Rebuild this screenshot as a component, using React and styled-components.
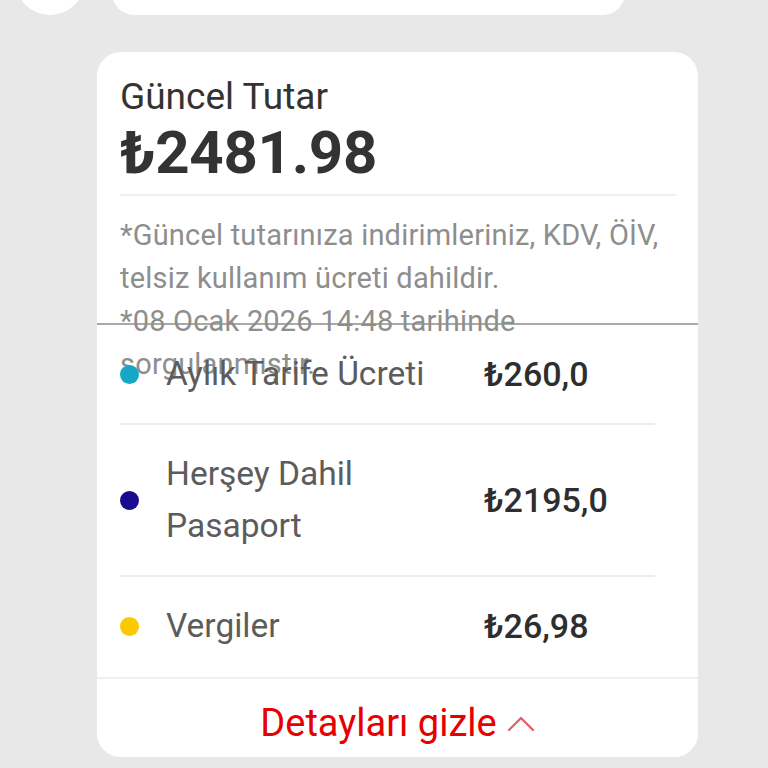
import React from "react";
import styled, { createGlobalStyle } from "styled-components";

const Global = createGlobalStyle`
  html, body { margin: 0; padding: 0; background: #e8e8e8; }
  body { font-family: Roboto, "Noto Sans", Arial, sans-serif; }
  * { box-sizing: border-box; }
`;

const Page = styled.div`
  width: 768px;
  min-height: 768px;
  background: #e8e8e8;
  overflow: hidden;
`;

const TopRow = styled.div`
  height: 15px;
  display: flex;
  align-items: flex-end;
  overflow: hidden;
  padding-left: 15px;
  gap: 27px;
`;

const Avatar = styled.div`
  width: 70px;
  height: 70px;
  flex: none;
  border-radius: 50%;
  background: #fff;
  display: flex;
  align-items: center;
  justify-content: center;
  padding-bottom: 20px;
`;

const AvatarMark = styled.div`
  width: 20px;
  height: 40px;
  border-radius: 10px;
  background: #333;
`;

const TopCard = styled.div`
  width: 513px;
  height: 60px;
  flex: none;
  background: #fff;
  border-radius: 22px;
`;

const Card = styled.section`
  margin: 37px 0 0 97px;
  width: 601px;
  background: #fff;
  border-radius: 24px;
  overflow: hidden;
`;

const Header = styled.div`
  padding: 22px 22px 0 23px;
`;

const Title = styled.div`
  font-size: 37px;
  line-height: 46px;
  color: #333;
`;

const Amount = styled.div`
  font-size: 60px;
  line-height: 66px;
  font-weight: 700;
  color: #333;
  letter-spacing: -0.3px;
  padding-bottom: 8px;
  border-bottom: 2px solid #f0f0f0;
`;

const Note = styled.div`
  height: 127px;
  padding: 18px 22px 0 23px;
  font-size: 29px;
  line-height: 43px;
  letter-spacing: 0.2px;
  color: #8e8e8e;
  white-space: pre-line;
`;

const List = styled.div`
  border-top: 2px solid #a9a9a9;
  padding: 0 43px 0 23px;
`;

const Row = styled.div`
  display: grid;
  grid-template-columns: 46px 318px auto;
  align-items: center;
  padding: 23px 0 ${(p) => (p.$last ? "25px" : "23px")};
  border-bottom: ${(p) => (p.$last ? "none" : "2px solid #ececec")};
`;

const Dot = styled.span`
  width: 19px;
  height: 19px;
  border-radius: 50%;
  background: ${(p) => p.$color};
`;

const Label = styled.span`
  font-size: 33.5px;
  line-height: 52px;
  color: #5c5c5c;
  padding-right: 40px;
`;

const Value = styled.span`
  font-size: 34px;
  line-height: 52px;
  font-weight: 500;
  color: #2e2e2e;
`;

const Footer = styled.button`
  width: 100%;
  height: 80px;
  border: none;
  border-top: 2px solid #efefef;
  background: #fff;
  display: flex;
  align-items: center;
  justify-content: center;
  gap: 10px;
  padding: 10px 0 0 0;
  font-family: inherit;
  font-size: 38px;
  color: #e60000;
  cursor: pointer;
`;

const items = [
  { color: "#17a7c6", label: "Aylık Tarife Ücreti", value: "₺260,0" },
  { color: "#190a8e", label: "Herşey Dahil Pasaport", value: "₺2195,0" },
  { color: "#fcc900", label: "Vergiler", value: "₺26,98" },
];

export default function App() {
  return (
    <Page>
      <Global />
      <TopRow>
        <Avatar>
          <AvatarMark />
        </Avatar>
        <TopCard />
      </TopRow>
      <Card>
        <Header>
          <Title>Güncel Tutar</Title>
          <Amount>₺2481.98</Amount>
        </Header>
        <Note>
          {"*Güncel tutarınıza indirimleriniz, KDV, ÖİV,\ntelsiz kullanım ücreti dahildir.\n*08 Ocak 2026 14:48 tarihinde\nsorgulanmıştır."}
        </Note>
        <List>
          {items.map((it, i) => (
            <Row key={it.label} $last={i === items.length - 1}>
              <Dot $color={it.color} />
              <Label>{it.label}</Label>
              <Value>{it.value}</Value>
            </Row>
          ))}
        </List>
        <Footer>
          Detayları gizle
          <svg width="28" height="20" viewBox="0 0 28 20" fill="none">
            <path d="M2 17 L14 5 L26 17" stroke="#e65a66" strokeWidth="2.2" strokeLinecap="round" strokeLinejoin="round" />
          </svg>
        </Footer>
      </Card>
    </Page>
  );
}
